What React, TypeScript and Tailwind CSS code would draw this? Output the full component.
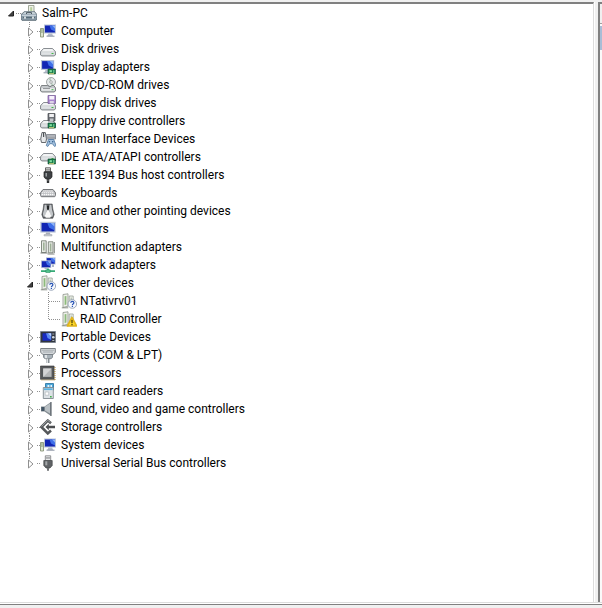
import { useState, type ReactNode } from 'react'

type IconName =
  | 'root'
  | 'computer'
  | 'disk'
  | 'display'
  | 'dvd'
  | 'floppy'
  | 'floppyController'
  | 'hid'
  | 'ide'
  | 'firewire'
  | 'keyboard'
  | 'mouse'
  | 'monitor'
  | 'multifunction'
  | 'network'
  | 'unknown'
  | 'warning'
  | 'portable'
  | 'port'
  | 'processor'
  | 'smartcard'
  | 'sound'
  | 'storage'
  | 'usb'

type Device = {
  label: string
  icon: IconName
  children?: Device[]
}

const categories: Device[] = [
  { label: 'Computer', icon: 'computer' },
  { label: 'Disk drives', icon: 'disk' },
  { label: 'Display adapters', icon: 'display' },
  { label: 'DVD/CD-ROM drives', icon: 'dvd' },
  { label: 'Floppy disk drives', icon: 'floppy' },
  { label: 'Floppy drive controllers', icon: 'floppyController' },
  { label: 'Human Interface Devices', icon: 'hid' },
  { label: 'IDE ATA/ATAPI controllers', icon: 'ide' },
  { label: 'IEEE 1394 Bus host controllers', icon: 'firewire' },
  { label: 'Keyboards', icon: 'keyboard' },
  { label: 'Mice and other pointing devices', icon: 'mouse' },
  { label: 'Monitors', icon: 'monitor' },
  { label: 'Multifunction adapters', icon: 'multifunction' },
  { label: 'Network adapters', icon: 'network' },
  {
    label: 'Other devices',
    icon: 'unknown',
    children: [
      { label: 'NTativrv01', icon: 'unknown' },
      { label: 'RAID Controller', icon: 'warning' },
    ],
  },
  { label: 'Portable Devices', icon: 'portable' },
  { label: 'Ports (COM & LPT)', icon: 'port' },
  { label: 'Processors', icon: 'processor' },
  { label: 'Smart card readers', icon: 'smartcard' },
  { label: 'Sound, video and game controllers', icon: 'sound' },
  { label: 'Storage controllers', icon: 'storage' },
  { label: 'System devices', icon: 'computer' },
  { label: 'Universal Serial Bus controllers', icon: 'usb' },
]

// Screen with its bezel, 12 x 9 before scaling
function Screen() {
  return (
    <>
      <path d="M0 0h12v9H0z" fill="#b9c3d6" />
      <path d="M1 1h10v7H1z" fill="#1226b4" />
      <path d="M5.5 1H11v6L7 5z" fill="#3f6fe8" />
      <path d="M8 1h3v3z" fill="#8db4f7" />
    </>
  )
}

// Flat drive body used by every disk-like device
function DriveBody() {
  return (
    <>
      <path d="M3.5 7.5h9l3 3.2v3.3l-1.5 1H2L.5 14v-3.3z" fill="#c4c8cb" stroke="#74797d" strokeWidth=".8" />
      <path d="M3.8 8h8.4l2.3 2.5h-13z" fill="#f1f3f4" />
      <path d="M1.3 11.2h13.4v2.6H1.3z" fill="#dfe2e4" />
      <path d="M11.5 12h2v1h-2z" fill="#43b649" />
    </>
  )
}

function Chip() {
  return (
    <>
      <path d="M8 10h7.5v5H8z" fill="#1d7a4b" stroke="#0e4f33" strokeWidth=".6" />
      <path d="M9.5 11.2h2.4v2H9.5z" fill="#7fe0a0" />
      <path d="M13 11h1.4v3H13z" fill="#59b883" />
      <path d="M9 14.2h5v1H9z" fill="#d6d27c" />
    </>
  )
}

function Cards() {
  return (
    <>
      <path d="M2 1.5L7 .8v12.4L2 14.5z" fill="#eef0ea" stroke="#8d948a" strokeWidth=".8" />
      <path d="M3.6 3.3l1.8-.3v8.5l-1.8.4z" fill="#8dba7c" />
      <path d="M8.2 3h4v10h-4z" fill="#f1f3ef" stroke="#979e94" strokeWidth=".8" />
      <path d="M9.6 4.5h1.2v5H9.6z" fill="#adb9a7" />
      <path d="M.8 14.8h6.5" stroke="#8a8f88" />
    </>
  )
}

const icons: Record<IconName, ReactNode> = {
  root: (
    <>
      <path d="M7.5 .5H13v7.5H7.5z" fill="#eef1e8" stroke="#8a9482" strokeWidth=".8" />
      <path d="M9.2 2.2h2V6h-2z" fill="#b7cf9c" />
      <path d="M3.5 6.5h10L16 9.6v4.6l-1 1.2H1L0 14.2V9.6z" fill="#8798a4" stroke="#56656f" strokeWidth=".7" />
      <path d="M4 6.8h9l2 2.5H1.4z" fill="#c4cfd5" />
      <path d="M5.5 9V7.6h5V9" fill="none" stroke="#4c5962" />
      <path d="M.8 10.3h14.4" stroke="#d6e2e8" />
      <path d="M2 12.6h12" stroke="#526773" />
      <path d="M3 11.5h2v2.3H3zM11 11.5h2v2.3h-2z" fill="#d4dcde" />
    </>
  ),
  computer: (
    <>
      <path d="M.5 5.5h3V14h-3z" fill="#dbe3cf" stroke="#7e8c6c" strokeWidth=".8" />
      <path d="M1.2 7h1.5M1.2 9h1.5" stroke="#66845a" />
      <g transform="translate(4 1.5)"><Screen /></g>
      <path d="M8.5 10.5h3.6l1 2.5h-6z" fill="#b4bccb" />
      <path d="M6.5 13.2h8" stroke="#8b94a4" />
    </>
  ),
  disk: <DriveBody />,
  display: (
    <>
      <g transform="translate(1 1) scale(1.1)"><Screen /></g>
      <path d="M5.5 11h4l1 2.3h-6z" fill="#b4bccb" />
      <path d="M3.5 13.8h6" stroke="#8b94a4" />
      <Chip />
    </>
  ),
  dvd: (
    <>
      <circle cx="11" cy="5" r="4.5" fill="#e5e9ea" stroke="#8a8f91" strokeWidth=".8" />
      <path d="M11 5L8.2 1.8A4 4 0 0 1 11 .8zM11 5l3 3a4 4 0 0 1-2.5 1z" fill="#b8cfbf" />
      <circle cx="11" cy="5" r="1.3" fill="#fff" stroke="#858b8d" strokeWidth=".7" />
      <path d="M1.5 8.5h6.2l2.2 1.3 2.2-1.3h1.6l1.8 2.3v3.2l-1.5 1H2L.5 14v-3.3z" fill="#c4c8cb" stroke="#65696c" strokeWidth=".8" />
      <path d="M1.5 11.2h13v2.4h-13z" fill="#eceeef" />
      <path d="M3 11.6h7" stroke="#777b7e" strokeWidth=".8" />
      <path d="M11.5 12.2h2v1h-2z" fill="#43b649" />
    </>
  ),
  floppy: (
    <>
      <DriveBody />
      <path d="M8 .5h7.5v8H8z" fill="#a984cf" stroke="#70558f" strokeWidth=".7" />
      <path d="M9.3 1h5v3.5h-5z" fill="#f7f2fb" />
      <path d="M9.8 6h4v2.5h-4z" fill="#ddd4e6" />
    </>
  ),
  floppyController: (
    <>
      <DriveBody />
      <path d="M8 .5h7v7.5H8z" fill="#6d7177" stroke="#43464b" strokeWidth=".7" />
      <path d="M9.3 1h4.6v3H9.3z" fill="#f1f1f3" />
      <path d="M9.8 5.5h3.6V8H9.8z" fill="#c3c6ca" />
      <Chip />
    </>
  ),
  hid: (
    <>
      <path d="M2 1.5h3.3L6.5 8l-.7 3.5H1.5L.7 8z" fill="#e6e8ea" stroke="#55595d" strokeWidth=".9" />
      <path d="M3.6 2v4" stroke="#4d5256" strokeWidth="1.2" />
      <path d="M6.5 3.5h9V8h-9z" fill="#c9cdd2" stroke="#747980" strokeWidth=".8" />
      <path d="M7.5 5h7M7.5 6.7h7" stroke="#61666d" strokeDasharray="1 1" />
      <path d="M8.5 8.5h5.2L16 14.5l-1.4 1-2.2-2.8H9.7l-2 2.8-1.4-1z" fill="#a5c2df" stroke="#46719c" strokeWidth=".8" />
      <circle cx="9.4" cy="10.7" r=".8" fill="#315b86" />
      <circle cx="12.7" cy="10.7" r=".8" fill="#315b86" />
    </>
  ),
  ide: (
    <>
      <g transform="translate(0 -3)"><DriveBody /></g>
      <Chip />
    </>
  ),
  firewire: (
    <>
      <path d="M5.5.8h5v4h-5z" fill="#e2e2e2" stroke="#555" strokeWidth=".9" />
      <path d="M7 2.2v1.4M9 2.2v1.4" stroke="#333" />
      <path d="M4 4.8h8V10l-1.8 2H5.8L4 10z" fill="#3f4245" stroke="#222" strokeWidth=".7" />
      <path d="M5.5 6h1.5v3.5H5.5z" fill="#9da1a4" />
      <path d="M8 12v4" stroke="#303234" strokeWidth="2.4" />
      <path d="M6.5 13.2h3" stroke="#999" strokeWidth=".6" />
    </>
  ),
  keyboard: (
    <>
      <path d="M3 4.5h10l2.5 3.2.2 3-1 1H1.3l-1-1 .2-3z" fill="#b9bbbe" stroke="#696b6e" strokeWidth=".9" strokeLinejoin="round" />
      <path d="M3.2 6h9.8M2 7.8h12M1.6 9.6h12.8" stroke="#f9f9f9" strokeWidth="1.1" strokeDasharray="1.4 .6" />
    </>
  ),
  mouse: (
    <>
      <path d="M3.8 1h8.4l.6 5 1.4 5.5-1.4 3.8H3.2l-1.4-3.8L3.2 6z" fill="#55595c" stroke="#4d4f52" strokeWidth=".6" />
      <path d="M4.6 1.8h1.9L7 7l-2.2 6.8H3.6L2.8 11 4 6.4zM11.4 1.8H9.5L9 7l2.2 6.8h1.2l.8-2.8L12 6.4z" fill="#c3c6c9" />
      <path d="M7 7.3h2l2.3 5.6-1.2 1.9H5.9l-1.2-1.9z" fill="#fafafa" />
      <path d="M8 3v3.2" stroke="#17191b" strokeWidth="1.6" />
    </>
  ),
  monitor: (
    <>
      <g transform="translate(.3 .8) scale(1.28 1.2)"><Screen /></g>
      <path d="M6.2 11.6h3.6l.8 2H5.4z" fill="#a8adb8" />
      <path d="M4 13.5h8v1.5H4z" fill="#c9ccd2" stroke="#9094a0" strokeWidth=".4" />
    </>
  ),
  multifunction: (
    <>
      <path d="M1.5 1.8h4.7v11.7H1.5z" fill="#e8ebe6" stroke="#788076" strokeWidth=".9" />
      <path d="M3 3.5h1.6v8H3z" fill="#9db096" />
      <path d="M8.3 2.8H13v11H8.3z" fill="#e8ebe6" stroke="#788076" strokeWidth=".9" />
      <path d="M9.8 4.5h1.6v8H9.8z" fill="#9db096" />
      <path d="M.5 14h7M7.5 15h7M14.3 3v11" stroke="#70756f" strokeWidth=".9" />
    </>
  ),
  network: (
    <>
      <g transform="translate(6 .3) scale(.8)"><Screen /></g>
      <g transform="translate(1 3.4) scale(.85)"><Screen /></g>
      <path d="M4.5 11h3v1h-3zM12 7.5h2V10h-2z" fill="#aeb8c8" />
      <path d="M1 14.2h14M8 11.5V14" stroke="#36aa77" strokeWidth="1.8" />
      <path d="M5.8 12.8h4.4v2.7H5.8z" fill="#55c58f" stroke="#1c8255" strokeWidth=".5" />
    </>
  ),
  unknown: (
    <>
      <Cards />
      <circle cx="11.3" cy="11" r="4.3" fill="#f4f7fc" stroke="#8b98ad" strokeWidth=".8" />
      <path d="M9.8 9.8c0-2 3.1-1.9 3.1 0 0 1.2-1.5 1.1-1.5 2.3M11.4 12.8v1.2" fill="none" stroke="#2451b4" strokeWidth="1.2" />
    </>
  ),
  warning: (
    <>
      <Cards />
      <path d="M11 6.5l4.6 8.5H6.4z" fill="#ffdb2b" stroke="#e0b41c" strokeWidth="1.6" strokeLinejoin="round" />
      <path d="M11 9v3.2M11 13v1.2" stroke="#332a00" strokeWidth="1.1" />
    </>
  ),
  portable: (
    <>
      <path d="M.5 2.5h15v11H.5z" fill="#32373f" stroke="#777f8d" strokeWidth=".8" />
      <path d="M2.5 4.3h8.7v7.4H2.5z" fill="#172bc3" />
      <path d="M6 4.3h5.2V11L7.5 9z" fill="#5c8bf2" />
      <path d="M8 4.3h3.2v3.2z" fill="#b9d2ff" />
      <circle cx="13.3" cy="8.2" r="1.3" fill="#d2d8df" />
      <path d="M12.3 5h2M12.3 11.5h2" stroke="#a8afba" />
    </>
  ),
  port: (
    <>
      <path d="M.7 1.5h14.6v4L13 7.5H3L.7 5.5z" fill="#d5d9dc" stroke="#70767b" strokeWidth=".9" />
      <path d="M2.5 3.2h11M3.5 5h9" stroke="#6d7479" strokeWidth=".9" strokeDasharray="1 1" />
      <path d="M3.5 7.5h9v2.8l-1.5 1.4H5l-1.5-1.4z" fill="#a9b2b9" stroke="#737b81" strokeWidth=".8" />
      <path d="M6 8v3.2" stroke="#f3f5f6" strokeWidth="1.5" />
      <path d="M8 11.7V16" stroke="#858d92" strokeWidth="3" />
      <path d="M7.5 11.7V16" stroke="#dde1e3" />
    </>
  ),
  processor: (
    <>
      <path d="M.5 1h13.6v13.3H.5z" fill="#55585a" stroke="#333" strokeWidth=".6" />
      <path d="M14.9 2v13.5M1.5 15h13.5" stroke="#a98742" strokeWidth="1.2" strokeDasharray="1 1" />
      <path d="M3.2 3.5h8.4v8.4H3.2z" fill="#b4b6b7" />
      <path d="M3.2 3.5h8.4l-8.4 8.4z" fill="#d3d4d5" />
    </>
  ),
  smartcard: (
    <>
      <path d="M5.5 .5h8V7h-8z" fill="#4ca7da" stroke="#226f9c" strokeWidth=".8" />
      <path d="M7.5 2h1.8v2.2H7.5zM10.5 2H12v2.2h-1.5z" fill="#e4f4fc" />
      <path d="M3.3 4.5h10v11h-10z" fill="#dde2e6" stroke="#818a91" strokeWidth=".9" />
      <path d="M4 5.3h8.6v1.8H4z" fill="#5bb2df" />
      <path d="M5.2 9h3.5v3.2H5.2z" fill="#fff" stroke="#9ba4ab" strokeWidth=".5" />
      <path d="M10 13h1.7v1.4H10z" fill="#46ae4e" />
    </>
  ),
  sound: (
    <>
      <path d="M1 5.5h3.5L11 1v14l-6.5-4.5H1z" fill="#858d93" />
      <path d="M1.4 6h2.8v4H1.4z" fill="#435666" />
      <path d="M5 5.8L10 2.5v10L5 9.5z" fill="#b9c0c4" />
      <path d="M11 1v14" stroke="#5f676d" strokeWidth="1.2" />
    </>
  ),
  storage: (
    <>
      <path d="M11 4.3L7.8 1.6 1.4 8l6.4 6.4 3.2-2.8" fill="none" stroke="#55585a" strokeWidth="2.6" />
      <path d="M10.3 3.3L7.8 1.3 1.5 7.5" fill="none" stroke="#a4a9ac" strokeWidth=".9" />
      <path d="M5.5 8l3.3-3.2v2H15v2.4H8.8v2z" fill="#4b4e50" />
    </>
  ),
  usb: (
    <>
      <path d="M5.3.8h5.4v5H5.3z" fill="#e9eaeb" stroke="#777a7c" strokeWidth=".8" />
      <path d="M7 2.2v1.5M9 2.2v1.5" stroke="#55585a" />
      <path d="M3.8 5.5h8.4v5L10 13H6l-2.2-2.5z" fill="#606366" stroke="#454749" strokeWidth=".7" />
      <path d="M5.3 6.3h2v4h-2z" fill="#a5a8aa" />
      <path d="M8 13v2.8" stroke="#6e7173" strokeWidth="2" />
    </>
  ),
}

function DeviceIcon({ name }: { name: IconName }) {
  return (
    <svg width="16" height="16" viewBox="0 0 16 16" className="shrink-0" aria-hidden="true">
      {icons[name]}
    </svg>
  )
}

type ToggleProps = {
  open: boolean
  label: string
  onClick: () => void
}

function Toggle({ open, label, onClick }: ToggleProps) {
  return (
    <button type="button" aria-label={label} aria-expanded={open} onClick={onClick} className="flex h-2.5 w-3 items-center justify-center">
      <svg width="12" height="10" viewBox="0 0 12 10" aria-hidden="true">
        {open ? (
          <path d="M9.5 3v5h-5z" fill="#444" stroke="#222" strokeLinejoin="round" />
        ) : (
          <path d="M5.5 1v8l4.5-4z" fill="#fff" stroke="#909090" />
        )}
      </svg>
    </button>
  )
}

const dotsDown = 'w-px bg-[repeating-linear-gradient(#909090_0_1px,transparent_1px_2px)]'
const dotsAcross = 'h-px bg-[repeating-linear-gradient(90deg,#909090_0_1px,transparent_1px_2px)]'

function ChildRow({ device, last }: { device: Device; last: boolean }) {
  return (
    <li className="flex h-[18px] items-center pl-[29px]">
      <span className="h-full w-[19px]">
        <span className={`block h-full ${dotsDown}`} />
      </span>
      <span className={`self-start ${last ? 'h-[9px]' : 'h-full'} ${dotsDown}`} />
      <span className={`w-3 ${dotsAcross}`} />
      <DeviceIcon name={device.icon} />
      <span className="pl-[3px]">{device.label}</span>
    </li>
  )
}

function CategoryRow({ device, last }: { device: Device; last: boolean }) {
  const [open, setOpen] = useState(Boolean(device.children))
  const children = open ? device.children ?? [] : []

  return (
    <li>
      <div className="flex h-[18px] items-center pl-[23px]">
        <span className="flex h-full w-3 flex-col">
          <span className={`ml-1.5 h-[5px] ${dotsDown}`} />
          <Toggle open={open} label={device.label} onClick={() => setOpen(!open)} />
          {!last && <span className={`ml-1.5 h-[3px] ${dotsDown}`} />}
        </span>
        <span className={`ml-0.5 w-[3px] ${dotsAcross}`} />
        <DeviceIcon name={device.icon} />
        <span className="pl-[5px]">{device.label}</span>
      </div>
      {children.length > 0 && (
        <ul>
          {children.map((child, i) => (
            <ChildRow key={child.label} device={child} last={i === children.length - 1} />
          ))}
        </ul>
      )}
    </li>
  )
}

export default function App() {
  const [open, setOpen] = useState(true)

  return (
    <div className="flex h-screen flex-col overflow-hidden bg-[#f0f0f0] font-['Roboto','Open_Sans',sans-serif] text-[12px] leading-[18px] text-black">
      <div className="flex min-h-0 flex-1 pt-[2px]">
        <main className="min-w-0 flex-1 overflow-hidden border-t-2 border-r border-t-[#808080] border-r-[#dcdcdc] bg-white whitespace-nowrap">
          <div className="flex h-[18px] items-center pl-1">
            <Toggle open={open} label="Salm-PC" onClick={() => setOpen(!open)} />
            <span className={`w-[5px] ${dotsAcross}`} />
            <DeviceIcon name="root" />
            <span className="pl-[5px]">Salm-PC</span>
          </div>
          {open && (
            <ul>
              {categories.map((device, i) => (
                <CategoryRow key={device.label} device={device} last={i === categories.length - 1} />
              ))}
            </ul>
          )}
        </main>
        <div className="w-1 border-l border-white" />
        <aside className="w-1 border-t-2 border-l-2 border-[#808080] bg-[#fafafa]">
          <div className="h-5 border-b border-[#a0a0a0] bg-[#f0f0f0]" />
          <div className="mt-0.5 h-6 bg-[#a9bdd6]" />
        </aside>
      </div>
      <footer className="border-t border-[#dcdcdc] bg-white pt-px">
        <div className="h-1 border-t border-[#808080] bg-[#f0f0f0]" />
      </footer>
    </div>
  )
}
